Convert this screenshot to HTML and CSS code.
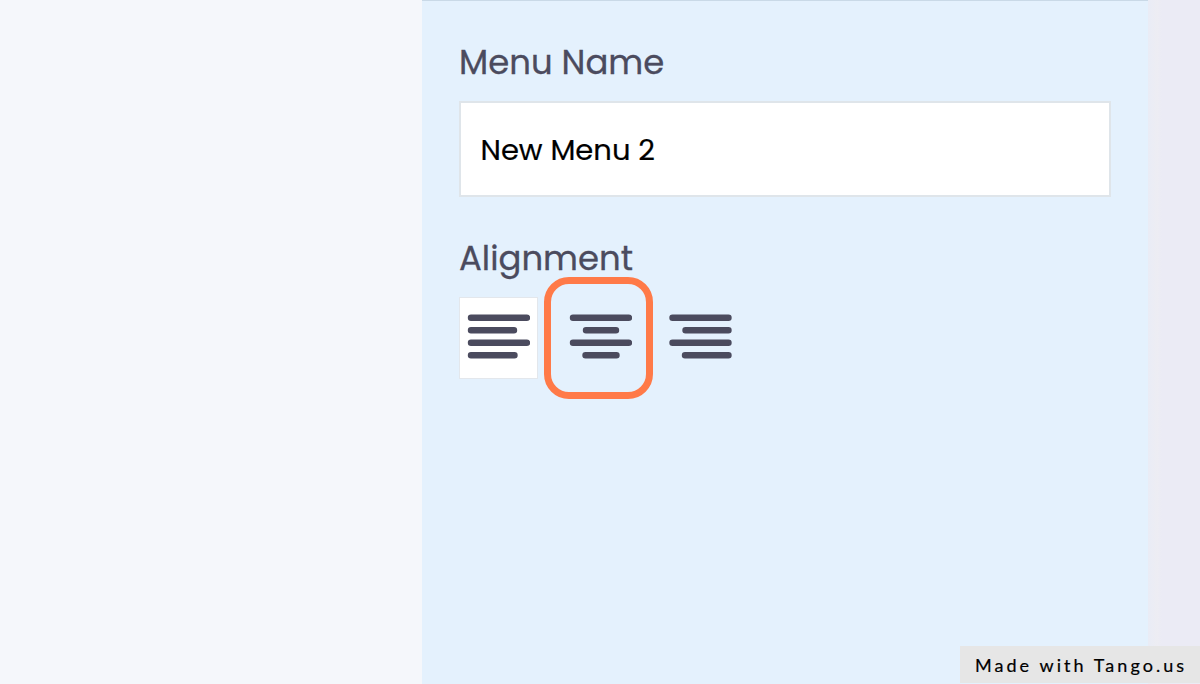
FILE: index.html
```html
<!DOCTYPE html>
<html lang="en">
<head>
  <meta charset="UTF-8" />
  <meta name="viewport" content="width=device-width, initial-scale=1.0" />
  <title>Menu Settings</title>
  <link rel="stylesheet" href="styles.css">
</head>
<body>
  <div class="page">
    <main class="panel">
      <label class="label" for="menuName">Menu Name</label>
      <input class="name-input" id="menuName" type="text" value="New Menu 2" />

      <div class="label label-align">Alignment</div>
      <div class="align-options">
        <button class="align-btn selected" aria-label="Align left">
          <svg width="63" height="45" viewBox="0 0 63 45">
            <path d="M4 3.8H60M4 16.3H47M4 28.8H60M4 41.3H47.5" />
          </svg>
        </button>
        <button class="align-btn center" aria-label="Align center">
          <svg width="63" height="45" viewBox="0 0 63 45">
            <path d="M4 3.8H60M17 16.3H47M4 28.8H60M16.5 41.3H47.5" />
          </svg>
          <span class="highlight"></span>
        </button>
        <button class="align-btn" aria-label="Align right">
          <svg width="63" height="45" viewBox="0 0 63 45">
            <path d="M3.5 3.8H59.5M16.5 16.3H59.5M3.5 28.8H59.5M16 41.3H59.5" />
          </svg>
        </button>
      </div>
    </main>
    <div class="gutter"></div>
    <div class="badge">Made with Tango.us</div>
  </div>
</body>
</html>
```

FILE: styles.css
```css
* {
  box-sizing: border-box;
}
body {
  margin: 0;
  background-color: #f5f7fb;
  font-family: Poppins, Inter, sans-serif;
}
.page {
  position: relative;
  display: flex;
  height: 684px;
  padding-left: 422px;
  overflow: hidden;
}
.panel {
  width: 726px;
  padding: 41px 37px 0;
  border-top: 1px solid #c9d9e7;
  background-color: #e4f1fd;
}
.gutter {
  flex: 1;
  background: linear-gradient(to right, #e9ecf6 0, #ededf3 9px, #ebebf5 14px);
}
.label {
  display: block;
  height: 40px;
  line-height: 40px;
  font-size: 33.9px;
  color: #4b4b5e;
  -webkit-text-stroke: 0.3px #4b4b5e;
}
.label-align {
  margin-top: 41px;
}
.name-input {
  display: block;
  width: 652px;
  height: 96px;
  margin-top: 19px;
  padding: 2px 20px 0 19.5px;
  border: 2px solid #dfe5ea;
  border-radius: 0;
  background-color: #fff;
  font-family: inherit;
  font-size: 29px;
  color: #000;
  -webkit-text-stroke: 0.2px #000;
}
.align-options {
  display: flex;
  gap: 22px;
  margin-top: 19px;
}
.align-btn {
  position: relative;
  display: flex;
  align-items: flex-start;
  width: 79px;
  height: 82px;
  padding: 16px 0 0 7px;
  border: 1px solid transparent;
  background: none;
}
.align-btn.selected {
  border-color: #e3e7ec;
  background-color: #fff;
}
.align-btn svg {
  fill: none;
  stroke: #4b4b5e;
  stroke-width: 6.4;
  stroke-linecap: round;
}
.align-btn.center {
  padding-left: 8px;
}
.highlight {
  position: absolute;
  top: -21px;
  left: -17px;
  width: 109px;
  height: 122px;
  border: 7px solid #ff7a48;
  border-radius: 25px;
}
.badge {
  position: absolute;
  right: 0;
  bottom: 1px;
  width: 240px;
  height: 37px;
  padding-left: 15px;
  background-color: #e6e6e6;
  font-family: Lato, sans-serif;
  font-size: 18px;
  line-height: 39px;
  letter-spacing: 3.05px;
  white-space: nowrap;
  color: #000;
  -webkit-text-stroke: 0.2px #000;
}
```
